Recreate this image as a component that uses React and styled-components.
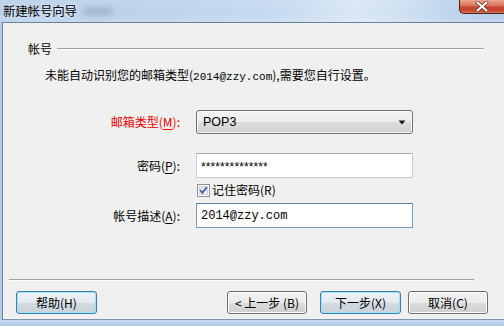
import React from 'react';
import styled, { createGlobalStyle } from 'styled-components';

const Global = createGlobalStyle`
  html, body { margin: 0; padding: 0; width: 504px; height: 326px; overflow: hidden; }
  body {
    font-family: "Noto Sans CJK SC", "Noto Sans", sans-serif;
    font-size: 12px;
    color: #000;
  }
  * { box-sizing: border-box; }
`;

const Window = styled.div`
  width: 504px;
  height: 326px;
  display: flex;
  flex-direction: column;
  overflow: hidden;
  background: #bcd3ec;
`;

const TitleBar = styled.div`
  height: 22px;
  display: flex;
  align-items: flex-start;
  background:
    linear-gradient(180deg, rgba(255,255,255,0.08) 0%, rgba(255,255,255,0) 60%, rgba(255,255,255,0.15) 100%),
    linear-gradient(90deg, #b7cfe9 0%, #bdd3ec 30%, #c6daf0 55%, #d8e6f5 70%, #cfe0f2 80%, #bcd3ec 90%, #b5cdea 100%);
`;

const Title = styled.div`
  padding: 4px 0 0 3px;
  font-size: 12.5px;
  line-height: 14px;
  letter-spacing: -0.2px;
  color: #000;
  text-shadow: 0 0 6px rgba(255, 255, 255, 0.9);
`;

const Blob = styled.div`
  width: 30px;
  height: 9px;
  margin: 7px 0 0 6px;
  border-radius: 4px;
  background: rgba(110, 125, 150, 0.28);
  filter: blur(2.5px);
`;

const CloseBtn = styled.div`
  margin-left: auto;
  width: 45px;
  height: 14px;
  border: 1px solid #4a231d;
  border-top: none;
  border-right: none;
  border-bottom-left-radius: 5px;
  background: linear-gradient(180deg, #e9a691 0%, #d97259 45%, #c5412c 55%, #c94b33 85%, #dd7a5c 100%);
  display: flex;
  align-items: flex-start;
  justify-content: center;
  padding-top: 1px;
`;

const Body = styled.div`
  flex: 1;
  display: flex;
  padding-left: 2px;
  background: linear-gradient(90deg, #b3cbe6, #c1d7ef);
`;

const Client = styled.div`
  flex: 1;
  display: flex;
  flex-direction: column;
  background: #f0f0f0;
  border-top: 1px solid #6b8099;
  border-left: 1px solid #6b8099;
  border-bottom: 1px solid #7f95ad;
`;

const BottomFrame = styled.div`
  height: 6px;
  background: linear-gradient(180deg, #c6daf0 0%, #afc9e6 100%);
`;

const GroupHeader = styled.div`
  margin: 19px 20px 0 25px;
  height: 14px;
  display: flex;
  align-items: center;
  gap: 5px;
`;

const GroupLabel = styled.span`
  line-height: 14px;
  white-space: nowrap;
`;

const EtchedLine = styled.div`
  flex: ${p => (p.$grow ? 1 : 'none')};
  height: 2px;
  border-top: 1px solid #a0a0a0;
  border-bottom: 1px solid #ffffff;
`;

const Message = styled.div`
  margin: 12px 0 0 42px;
  line-height: 14px;
  white-space: nowrap;
`;

const Mono = styled.span`
  font-family: "Liberation Mono", "DejaVu Sans Mono", monospace;
  font-size: ${p => p.$size || 12}px;
`;

const Form = styled.div`
  margin-top: 26px;
  display: flex;
  flex-direction: column;
`;

const Row = styled.div`
  display: grid;
  grid-template-columns: 177px 217px;
  column-gap: 16px;
  align-items: center;
  margin-top: ${p => p.$gap || 0}px;
  height: ${p => p.$h}px;
`;

const Label = styled.label`
  text-align: right;
  line-height: 14px;
  white-space: nowrap;
  color: ${p => (p.$red ? '#e80000' : '#000')};
`;

const U = styled.span`
  text-decoration: underline;
  text-underline-offset: 2px;
`;

const Select = styled.div`
  height: 24px;
  border: 1px solid #707070;
  border-radius: 3px;
  background: linear-gradient(180deg, #f3f3f3 0%, #ebebeb 50%, #dddddd 51%, #d2d2d2 100%);
  box-shadow: inset 0 0 0 1px #fbfbfb;
  display: flex;
  align-items: center;
  padding: 0 6px 0 6px;
  line-height: 14px;
`;

const SelectText = styled.span`
  flex: 1;
  font-family: "Liberation Sans", Arial, sans-serif;
  font-size: 12.5px;
`;

const TextBox = styled.div`
  height: 25px;
  background: #fff;
  border: 1px solid ${p => (p.$focus ? '#7a9bbf' : '#c5cdd8')};
  border-top-color: ${p => (p.$focus ? '#5d7fa6' : '#abadb3')};
  display: flex;
  align-items: center;
  padding-left: 4px;
  white-space: nowrap;
`;

const Stars = styled.span`
  font-family: "Liberation Sans", Arial, sans-serif;
  font-size: 12px;
  letter-spacing: 0.1px;
  padding-top: 2px;
`;

const CheckWrap = styled.div`
  grid-column: 2;
  display: flex;
  align-items: center;
  gap: 2px;
  padding-left: 1px;
  line-height: 14px;
  white-space: nowrap;
`;

const Footer = styled.div`
  margin-top: auto;
  display: flex;
  flex-direction: column;
  padding-bottom: 5px;
`;

const Separator = styled(EtchedLine)`
  margin: 0 30px 0 6px;
`;

const ButtonRow = styled.div`
  margin-top: 10px;
  display: flex;
  padding: 0 16px 0 13px;
`;

const Button = styled.div`
  width: ${p => p.$w}px;
  height: 23px;
  margin-left: ${p => (p.$auto ? 'auto' : `${p.$ml || 0}px`)};
  border: 1px solid ${p => (p.$focus ? '#3c7fb1' : '#707070')};
  border-radius: 3px;
  background: ${p =>
    p.$focus
      ? 'linear-gradient(180deg, #eef3f7 0%, #e3e9ee 50%, #d3dbe2 51%, #c9d2da 100%)'
      : 'linear-gradient(180deg, #f2f2f2 0%, #ebebeb 50%, #dddddd 51%, #cfcfcf 100%)'};
  box-shadow: ${p => (p.$focus ? 'inset 0 0 0 1px #9fe3f9' : 'inset 0 0 0 1px #fcfcfc')};
  display: flex;
  align-items: center;
  justify-content: center;
  line-height: 14px;
  white-space: nowrap;
`;

const CloseIcon = () => (
  <svg width="14" height="11" viewBox="0 0 14 11">
    <path d="M2.5 1.5 L11.5 9.5 M11.5 1.5 L2.5 9.5" stroke="#5a2a20" strokeWidth="3.6" strokeLinecap="round" />
    <path d="M2.5 1.5 L11.5 9.5 M11.5 1.5 L2.5 9.5" stroke="#ffffff" strokeWidth="2.2" strokeLinecap="round" />
  </svg>
);

const Arrow = () => (
  <svg width="8" height="5" viewBox="0 0 8 5">
    <path d="M0.5 0.5 L7.5 0.5 L4 4.5 Z" fill="#1a1a1a" />
  </svg>
);

const CheckBox = () => (
  <svg width="13" height="13" viewBox="0 0 13 13">
    <defs>
      <linearGradient id="cbg" x1="0" y1="0" x2="1" y2="1">
        <stop offset="0" stopColor="#dcdcdc" />
        <stop offset="1" stopColor="#fbfbfb" />
      </linearGradient>
    </defs>
    <rect x="0.5" y="0.5" width="12" height="12" fill="#fff" stroke="#8e8f8f" />
    <rect x="2.5" y="2.5" width="8" height="8" fill="url(#cbg)" stroke="#d3d3d3" />
    <path d="M3.2 6.2 L5.4 8.8 L9.8 3.4" fill="none" stroke="#3a5fa3" strokeWidth="1.8" />
  </svg>
);

export default function App() {
  return (
    <>
      <Global />
      <Window>
        <TitleBar>
          <Title>新建帐号向导</Title>
          <Blob />
          <CloseBtn>
            <CloseIcon />
          </CloseBtn>
        </TitleBar>
        <Body>
          <Client>
            <GroupHeader>
              <GroupLabel>帐号</GroupLabel>
              <EtchedLine $grow />
            </GroupHeader>
            <Message>
              未能自动识别您的邮箱类型(<Mono $size={11}>2014@zzy.com</Mono>),需要您自行设置。
            </Message>
            <Form>
              <Row $h={24}>
                <Label $red>
                  邮箱类型(<U>M</U>):
                </Label>
                <Select>
                  <SelectText>POP3</SelectText>
                  <Arrow />
                </Select>
              </Row>
              <Row $h={25} $gap={19}>
                <Label>
                  密码(<U>P</U>):
                </Label>
                <TextBox>
                  <Stars>**************</Stars>
                </TextBox>
              </Row>
              <Row $h={13} $gap={5}>
                <CheckWrap>
                  <CheckBox />
                  <span>记住密码(R)</span>
                </CheckWrap>
              </Row>
              <Row $h={25} $gap={7}>
                <Label>
                  帐号描述(<U>A</U>):
                </Label>
                <TextBox $focus>
                  <Mono>2014@zzy.com</Mono>
                </TextBox>
              </Row>
            </Form>
            <Footer>
              <Separator />
              <ButtonRow>
                <Button $w={81} $focus>帮助(H)</Button>
                <Button $w={80} $auto>&lt; 上一步 (B)</Button>
                <Button $w={81} $ml={13} $focus>下一步(X)</Button>
                <Button $w={80} $ml={7}>取消(C)</Button>
              </ButtonRow>
            </Footer>
          </Client>
        </Body>
        <BottomFrame />
      </Window>
    </>
  );
}
